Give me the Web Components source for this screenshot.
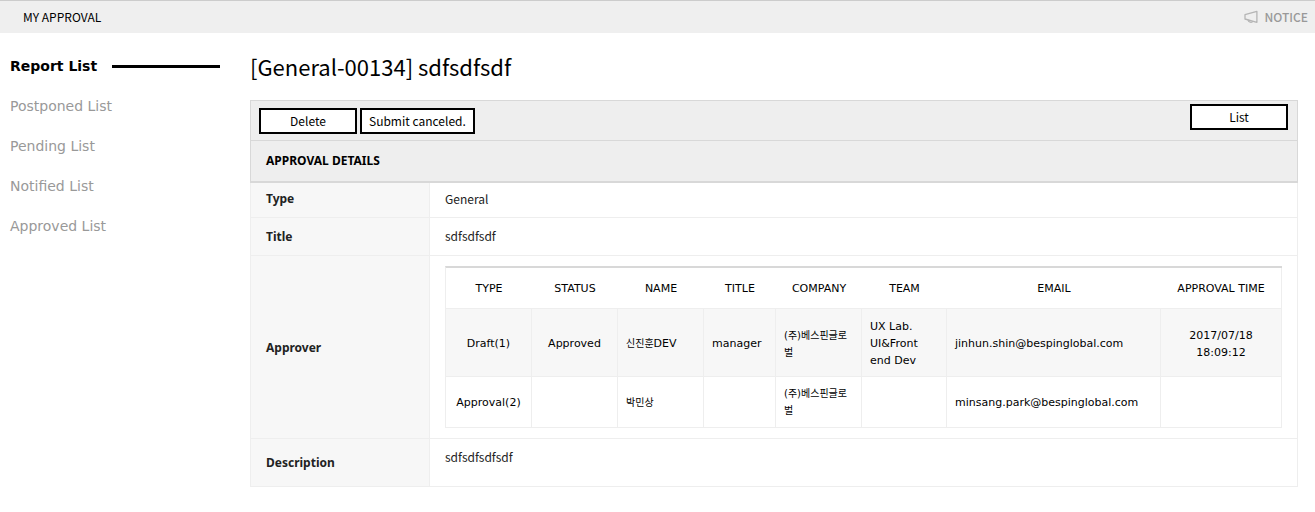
<!DOCTYPE html>
<html lang="en">
<head>
<meta charset="utf-8">
<title>My Approval</title>
<style>
  body { margin: 0; background: #fff; color: #000; font-family: "Noto Sans CJK KR", sans-serif; font-size: 12px; }
  .layout { display: grid; grid-template-columns: 220px minmax(0, 1fr); column-gap: 30px; padding-right: 17px; }
</style>
</head>
<body>
<top-bar>MY APPROVAL<notice-link slot="end">NOTICE</notice-link></top-bar>
<div class="layout">
  <side-nav>
    <side-item current>Report List</side-item>
    <side-item>Postponed List</side-item>
    <side-item>Pending List</side-item>
    <side-item>Notified List</side-item>
    <side-item>Approved List</side-item>
  </side-nav>
  <page-content>
    <span slot="title">[General-00134] sdfsdfsdf</span>
    <tool-bar>
      <box-button>Delete</box-button>
      <box-button>Submit canceled.</box-button>
      <box-button slot="end">List</box-button>
    </tool-bar>
    <approval-details></approval-details>
  </page-content>
</div>

<script>
const define = (name, html) => customElements.define(name, class extends HTMLElement {
  constructor() {
    super();
    const t = document.createElement('template');
    t.innerHTML = html;
    this.attachShadow({ mode: 'open' }).append(t.content.cloneNode(true));
  }
});

define('top-bar', `
  <style>
    :host { display: block; }
    header { display: flex; align-items: center; justify-content: space-between; box-sizing: border-box; min-height: 33px; padding: 0 7px 0 23px; border-top: 1px solid #ccc; background: #efefef; line-height: 20px; }
  </style>
  <header><span><slot></slot></span><slot name="end"></slot></header>`);

define('notice-link', `
  <style>
    :host { display: block; }
    a { display: flex; align-items: center; gap: 6px; color: #999; text-decoration: none; font-weight: 500; }
    svg { display: block; }
  </style>
  <a href="#notice"><svg width="14" height="14" viewBox="0 0 14 14" fill="none" stroke="#b5b5b5" stroke-width="1.3" stroke-linejoin="round" aria-hidden="true"><path d="M1 4.600 12.900 1.300v11L1 9Z"/><path d="M4 9.800c.2 2.600 3.900 3.300 4.900 1.400"/></svg><span><slot></slot></span></a>`);

define('side-nav', `
  <style>
    :host { display: block; }
    nav { display: flex; flex-direction: column; padding: 13px 0 0 10px; }
  </style>
  <nav aria-label="Approval lists"><slot></slot></nav>`);

define('side-item', `
  <style>
    :host { display: block; }
    a { display: flex; align-items: center; gap: 15px; height: 40px; color: #999; text-decoration: none; font: 14px/20px "DejaVu Sans", Verdana, sans-serif; white-space: nowrap; }
    :host([current]) a { color: #000; font-weight: bold; }
    :host([current]) a::after { content: ""; flex: 1; height: 3px; background: #000; }
  </style>
  <a href="#list"><slot></slot></a>`);

define('page-content', `
  <style>
    :host { display: block; }
    h1 { margin: 0; padding: 15px 0 16px; font-size: 22px; line-height: 36px; font-weight: 400; }
    section { border-top: 1px solid #d8d8d8; }
  </style>
  <main><h1><slot name="title"></slot></h1><section><slot></slot></section></main>`);

define('tool-bar', `
  <style>
    :host { display: flex; justify-content: space-between; align-items: flex-start; padding: 3px 9px 6px 8px; background: #eee; border: solid #d8d8d8; border-width: 0 1px; }
    div { display: flex; gap: 3px; padding-top: 4px; }
  </style>
  <div><slot></slot></div><slot name="end"></slot>`);

define('box-button', `
  <style>
    :host { display: block; }
    button { display: block; min-width: 98px; height: 26px; margin: 0; padding: 0 7px; border: 2px solid #000; border-radius: 0; background: #fff; color: #000; font: inherit; line-height: 20px; cursor: pointer; }
  </style>
  <button type="button"><slot></slot></button>`);

define('approval-details', `
  <style>
    :host { display: block; }
    h2 { margin: 0; padding: 10px 15px; border: 1px solid #d8d8d8; border-bottom-width: 2px; background: #eee; font: bold 12px/20px "Noto Sans", sans-serif; }
    table { width: 100%; border-spacing: 0; table-layout: fixed; border-left: 1px solid #eee; }
    col { width: 179px; } col + col { width: auto; }
    th, td { padding: 8px 15px 9px; border: solid #eee; border-width: 0 1px 1px 0; line-height: 20px; text-align: left; color: #222; }
    th { padding: 9px 15px 8px; background: #f7f7f7; font: bold 12px/20px "Noto Sans", sans-serif; }
    tr:first-child > * { padding: 6px 15px 8px; }
    .holder { padding: 10px 15px; }
    .note { height: 30px; vertical-align: top; }
  </style>
  <h2>APPROVAL DETAILS</h2>
  <table>
    <colgroup><col><col></colgroup>
    <tr><th scope="row">Type</th><td>General</td></tr>
    <tr><th scope="row">Title</th><td>sdfsdfsdf</td></tr>
    <tr><th scope="row">Approver</th><td class="holder"><approver-table></approver-table></td></tr>
    <tr><th scope="row">Description</th><td class="note">sdfsdfsdfsdf</td></tr>
  </table>`);

define('approver-table', `
  <style>
    :host { display: block; color: #000; font: 11px/17px "DejaVu Sans", Verdana, "Noto Sans CJK KR", sans-serif; }
    table { width: 100%; table-layout: fixed; border-spacing: 0; border: solid #eee; border-width: 0 0 0 1px; border-top: 2px solid #d8d8d8; }
    th, td { padding: 8px; border-bottom: 1px solid #eee; text-align: center; }
    th { padding: 12px 0 11px; font-weight: 400; }
    td, th:last-child { border-right: 1px solid #eee; }
    tbody tr:first-child { background: #f7f7f7; }
    tbody tr:first-child td { padding: 9px 8px 7px; }
    .start { text-align: left; }
    .ko { font-size: 10px; }
    .s { width: 72px; } .m { width: 86px; } .t { width: 85px; } .l { width: 121px; }
  </style>
  <table>
    <colgroup><col class="m"><col class="m"><col class="m"><col class="s"><col class="m"><col class="t"><col><col class="l"></colgroup>
    <thead><tr><th>TYPE</th><th>STATUS</th><th>NAME</th><th>TITLE</th><th>COMPANY</th><th>TEAM</th><th>EMAIL</th><th>APPROVAL TIME</th></tr></thead>
    <tbody>
      <tr><td>Draft(1)</td><td>Approved</td><td class="start"><span class="ko">신진훈</span>DEV</td><td class="start">manager</td><td class="start ko">(주)베스핀글로벌</td><td class="start">UX Lab. UI&amp;Front end Dev</td><td class="start">jinhun.shin@bespinglobal.com</td><td>2017/07/18 18:09:12</td></tr>
      <tr><td>Approval(2)</td><td></td><td class="start ko">박민상</td><td></td><td class="start ko">(주)베스핀글로벌</td><td></td><td class="start">minsang.park@bespinglobal.com</td><td></td></tr>
    </tbody>
  </table>`);
</script>
</body>
</html>
